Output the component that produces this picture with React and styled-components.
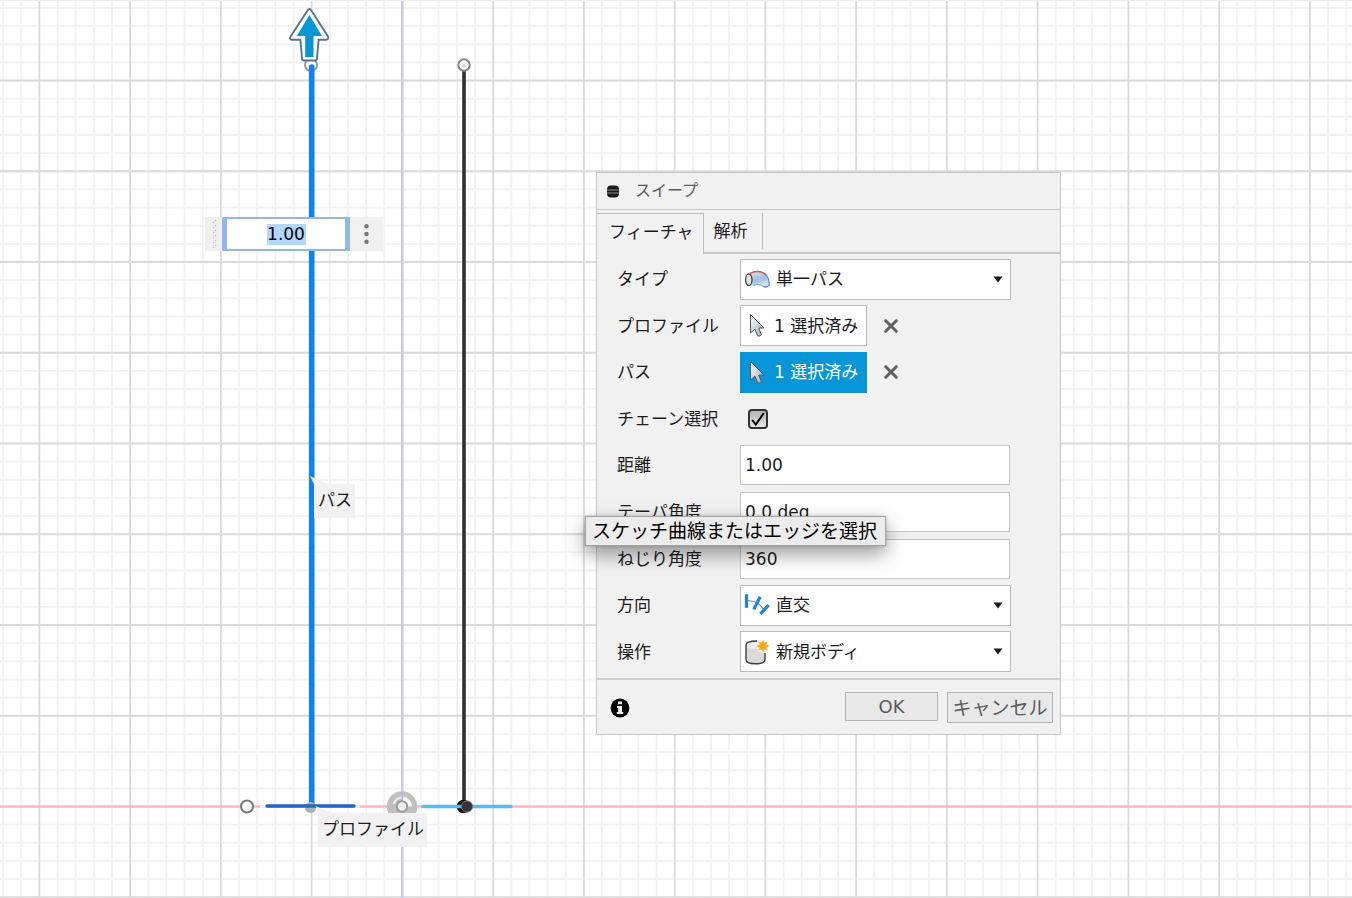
import React from 'react';
import styled, { createGlobalStyle, css } from 'styled-components';

const ORIGIN = { x: 402.4, y: 806.5 };
const STEP = 18.15;

const colors = {
  panel: '#f1f1f1',
  line: '#c8c8c8',
  text: '#1c1c1c',
  muted: '#5a5a5a',
  accent: '#0696d7',
};

const GlobalStyle = createGlobalStyle`
  *, *::before, *::after { box-sizing: border-box; }
  body {
    margin: 0;
    background: #fff;
    color: ${colors.text};
    font: 17px/24px 'DejaVu Sans', 'Noto Sans CJK JP', sans-serif;
  }
  button, input, select { font: inherit; color: inherit; }
`;

const Viewport = styled.main`
  position: relative;
  min-height: 100vh;
  overflow: hidden;
  border-top: 1px solid #eee;
`;

const Drawing = styled.svg`
  position: absolute;
  inset: -1px 0 0;
  width: 100%;
  height: calc(100% + 1px);
`;

const Callout = styled.div`
  position: absolute;
  left: ${(p) => p.$x}px;
  top: ${(p) => p.$y}px;
  padding: 4px 3px 6px 4px;
  background: ${colors.panel};
  white-space: nowrap;
`;

const FloatingField = styled.div`
  position: absolute;
  left: 205px;
  top: 216px;
  display: grid;
  grid-template-columns: 17px 128px 33px;
  height: 34px;
  align-items: stretch;
  background: #f0f0f0;
`;

const FloatingInput = styled.input`
  width: 100%;
  min-width: 0;
  padding: 0;
  border: 2px solid #92b6ee;
  border-width: 2px 5px;
  outline: 0;
  border-radius: 1px;
  text-align: center;
  color: #000;
  background: linear-gradient(#b3d7ff, #b3d7ff) center / 39px 21px no-repeat, #fff;
`;

const IconButton = styled.button`
  display: flex;
  align-items: center;
  justify-content: center;
  padding: 0;
  border: 0;
  background: none;
`;

const Dialog = styled.section`
  position: absolute;
  left: 596px;
  top: 171px;
  width: 465px;
  border: 1px solid ${colors.line};
  background: ${colors.panel};
`;

const Header = styled.header`
  display: flex;
  align-items: center;
  gap: 15px;
  height: 37px;
  padding-left: 9px;
  border-bottom: 1px solid ${colors.line};
`;

const Title = styled.h1`
  margin: 0;
  font-size: 16px;
  font-weight: 400;
  color: ${colors.muted};
`;

const Tabs = styled.div`
  display: flex;
  height: 44px;
  padding-top: 3px;
  border-bottom: 2px solid ${colors.line};
`;

const Tab = styled.button`
  height: 36px;
  padding: 0 14px 0 10px;
  border: 0 solid #bcbcbc;
  border-right-width: 1px;
  background: ${colors.panel};
  white-space: nowrap;
  ${(p) =>
    p.$active &&
    css`
      height: 41px;
      padding: 0 9px 4px 12px;
      border-width: 1px 1px 0 0;
    `}
`;

const Form = styled.form`
  display: grid;
  grid-template-rows: repeat(9, 1fr);
  height: 424px;
  padding: 2px 0 3px 20px;
`;

const Row = styled.div`
  display: grid;
  grid-template-columns: 123px 271px;
  align-items: center;
`;

const Label = styled.label`
  white-space: nowrap;
`;

const SelectBox = styled.div`
  position: relative;
  display: flex;
`;

const Select = styled.select`
  appearance: none;
  width: 100%;
  height: 41px;
  padding: 0 28px 0 35px;
  border: 1px solid #bcbcbc;
  border-radius: 0;
  background: #fff;
`;

const SelectIcon = styled.svg`
  position: absolute;
  left: 4px;
  top: 7px;
  width: 28px;
  height: 28px;
  pointer-events: none;
`;

const Caret = styled.svg`
  position: absolute;
  right: 8px;
  top: 17px;
  width: 10px;
  height: 7px;
  pointer-events: none;
`;

const TextInput = styled.input`
  width: 270px;
  height: 40px;
  padding: 0 4px;
  border: 1px solid ${colors.line};
  background: #fff;
`;

const Selection = styled.div`
  display: flex;
  align-items: center;
  gap: 16px;
`;

const SelectionButton = styled.button`
  display: flex;
  align-items: center;
  gap: 7px;
  width: 127px;
  height: 41px;
  padding: 0 0 0 7px;
  border: 1px solid ${(p) => (p.$active ? colors.accent : '#bcbcbc')};
  background: ${(p) => (p.$active ? colors.accent : '#fff')};
  color: ${(p) => (p.$active ? '#fff' : colors.text)};
  white-space: nowrap;
`;

const Checkbox = styled.input`
  appearance: none;
  width: 20px;
  height: 20px;
  margin: 0 0 0 8px;
  border: 2px solid #333;
  border-radius: 4px;
  background: linear-gradient(#b4b4b4, #e4e4e4);
`;

const CheckHolder = styled.div`
  display: grid;
  justify-items: start;
  > * { grid-area: 1 / 1; }
  > svg { margin-left: 8px; pointer-events: none; }
`;

const Footer = styled.footer`
  display: flex;
  align-items: flex-start;
  gap: 9px;
  height: 56px;
  padding: 12px 7px 0 13px;
  border-top: 2px solid #d0d0d0;
`;

const InfoButton = styled(IconButton)`
  margin: 6px auto 0 0;
`;

const ActionButton = styled.button`
  height: ${(p) => (p.$wide ? 31 : 29)}px;
  width: ${(p) => (p.$wide ? 106 : 93)}px;
  padding: 0;
  border: 1px solid #b4b4b4;
  background: #e8e8e8;
  color: ${colors.muted};
  font-size: ${(p) => (p.$wide ? 19 : 18)}px;
  white-space: nowrap;
`;

const Tooltip = styled.div`
  position: absolute;
  left: 585px;
  top: 515px;
  padding: 1px 8px 1px 6px;
  border: 1px solid #a4a4a4;
  background: #ececec;
  box-shadow: 0 8px 20px rgba(0, 0, 0, 0.4), 0 0 3px rgba(0, 0, 0, 0.2);
  color: #000;
  font-size: 19px;
  line-height: 26px;
  white-space: nowrap;
`;

function GridLines() {
  const minor = [];
  const major = [];
  for (let i = -44; i < 200; i += 1) {
    const target = i % 5 === 0 ? major : minor;
    const x = ORIGIN.x + i * STEP;
    const y = ORIGIN.y + i * STEP;
    if (x > 0) target.push(<line key={`v${i}`} x1={x} x2={x} y1="0" y2="100%" />);
    if (y > 0) target.push(<line key={`h${i}`} x1="0" x2="100%" y1={y} y2={y} />);
  }
  return (
    <>
      <g stroke="#f2f2f2" strokeWidth="1.9">{minor}</g>
      <g stroke="#dadada" strokeWidth="1.8">{major}</g>
    </>
  );
}

function Sketch() {
  return (
    <Drawing aria-hidden="true">
      <GridLines />
      <path d="M402.3 0V1600" stroke="#c8c8ff" strokeWidth="2.4" />
      <line x1="0" x2="100%" y1="806.5" y2="806.5" stroke="#ffb4b4" strokeWidth="1.8" />
      <circle cx="402" cy="806.5" r="15.2" fill="#c0c0c0" />
      <path d="M402 806.5V796.5A10 10 0 0 1 412 806.5Z" fill="#f6f6f6" />
      <path d="M394 804A8.5 8.5 0 0 1 402 797.5" fill="none" stroke="#f0f0f0" strokeWidth="2" />
      <path d="M402.3 791V801" stroke="#b4b4ee" strokeWidth="1.6" />
      <circle cx="402" cy="806.5" r="5.2" fill="#f0ecf6" stroke="#9c9c9c" strokeWidth="2" />
      <path d="M260 806.5H266M355 806.5H360" stroke="#fff" strokeWidth="2" />
      <circle cx="311" cy="65" r="6" fill="#fff" stroke="#999" strokeWidth="2" />
      <path d="M311.7 67V804" stroke="#0d80ff" strokeWidth="5.6" strokeLinecap="round" />
      <circle cx="310.5" cy="807.5" r="5.5" fill="#a8b0bc" />
      <path d="M267 806H354" stroke="#2464c4" strokeWidth="3.4" strokeLinecap="round" />
      <path d="M464 70V804" stroke="#303030" strokeWidth="3.6" />
      <circle cx="464" cy="65" r="5.8" fill="#fff" stroke="#888" strokeWidth="2.1" />
      <circle cx="464" cy="65.5" r="2" fill="#ddd" />
      <circle cx="463.5" cy="806.5" r="6.8" fill="#111" />
      <path d="M423 806.5H511" stroke="#5dbbe9" strokeWidth="3.6" strokeLinecap="round" />
      <circle cx="467" cy="806.5" r="5.6" fill="#333" stroke="#777" />
      <circle cx="247" cy="806.5" r="6" fill="#fff" stroke="#7a7a7a" strokeWidth="2.1" />
      <path
        d="M307.5 10.5Q309.4 7.5 311.3 10.5L328 36.5Q329 39.5 326 39.8H318.6L317 58.5Q317 60.5 315 60.5H304Q302 60.5 302 58.5L300.4 39.8H292Q289 39.5 290.6 36.5Z"
        fill="#fff"
        stroke="#587391"
        strokeWidth="1.9"
      />
      <path d="M309.4 15L322 36H313.5V57H305.2V36H296.8Z" fill={colors.accent} />
      <path d="M310 476L327 484V486H315Z" fill={colors.panel} />
      <path d="M315.5 806L331 813V816H320Z" fill={colors.panel} />
    </Drawing>
  );
}

function Cursor() {
  return (
    <svg width="19" height="27" viewBox="0 0 19 27" aria-hidden="true">
      <path
        d="M2.5 2.5V21L6.9 17.2L9.6 23.8Q11 25 13.4 22.8L10.8 16H16Z"
        fill="url(#cursorFill)"
        stroke="#55585e"
        strokeLinejoin="round"
      />
      <defs>
        <linearGradient id="cursorFill" x1="0" y1="0" x2="1" y2="1">
          <stop offset="0" stopColor="#fff" />
          <stop offset="1" stopColor="#9da5b4" />
        </linearGradient>
      </defs>
    </svg>
  );
}

function PipeIcon() {
  return (
    <SelectIcon viewBox="0 0 28 28" aria-hidden="true">
      <defs>
        <linearGradient id="pipeFill" x1="0" y1="0" x2="0.4" y2="1">
          <stop offset="0" stopColor="#d5e5f3" />
          <stop offset="0.6" stopColor="#9fc0e2" />
          <stop offset="1" stopColor="#d0e1f2" />
        </linearGradient>
      </defs>
      <path d="M5 7.8Q9 5.4 14 5.6Q25 6.4 25.3 19.2Q22.5 22 19.4 20.6Q14.5 16.8 9.5 19.5L5 19.8Z" fill="url(#pipeFill)" />
      <path d="M6 7.3Q10 5.3 14 5.6Q19.5 6 22.5 9.4" fill="none" stroke="#da5148" strokeWidth="1.5" />
      <path d="M22.5 9.4Q25.2 12.8 25.3 19.2Q22.5 22 19.4 20.6" fill="none" stroke="#5078d2" strokeWidth="1.1" />
      <path d="M19.4 20.6Q14.5 16.8 9.5 19.5" fill="none" stroke="#7f9fd0" />
      <ellipse cx="4.8" cy="13.7" rx="3.2" ry="5.9" fill="#dde3de" stroke="#3c3c3c" strokeWidth="1.2" />
    </SelectIcon>
  );
}

function OrientationIcon() {
  return (
    <SelectIcon viewBox="0 0 28 28" aria-hidden="true">
      <path d="M3 8.8Q14 8 21 19" fill="none" stroke="#888" strokeWidth="1.2" />
      <path d="M2.5 2.3V15.8M16.2 4.8L9.8 17.4M24.8 13L16.4 21.8" stroke="#1787ea" strokeWidth="3.2" />
    </SelectIcon>
  );
}

function NewBodyIcon() {
  return (
    <SelectIcon viewBox="0 0 28 28" aria-hidden="true">
      <path d="M2 7V21.5Q2 25.8 11.5 25.8T21 21.5V7" fill="#d9d9d9" />
      <ellipse cx="11.5" cy="7" rx="9.5" ry="4" fill="#ededed" />
      <path d="M13 3Q2 3 2 7V21.5Q2 25.8 11.5 25.8T21 21.5V15" fill="none" stroke="#3b3b3b" strokeWidth="1.4" />
      <circle cx="19" cy="8" r="7" fill="#fff" opacity="0.7" />
      <path
        d="M19 1.5L20.4 4.8L23.6 3.4L22.2 6.6L25.5 8L22.2 9.4L23.6 12.6L20.4 11.2L19 14.5L17.6 11.2L14.4 12.6L15.8 9.4L12.5 8L15.8 6.6L14.4 3.4L17.6 4.8Z"
        fill="#ffa31a"
      />
    </SelectIcon>
  );
}

function SelectRow({ id, label, value, icon }) {
  return (
    <Row>
      <Label htmlFor={id}>{label}</Label>
      <SelectBox>
        <Select id={id} defaultValue={value}>
          <option>{value}</option>
        </Select>
        {icon}
        <Caret viewBox="0 0 10 7" aria-hidden="true">
          <path d="M0.5 0.5H9.5L5 6.5Z" fill="#1a1a1a" />
        </Caret>
      </SelectBox>
    </Row>
  );
}

function SelectionRow({ id, label, active }) {
  return (
    <Row>
      <Label htmlFor={id}>{label}</Label>
      <Selection>
        <SelectionButton id={id} type="button" $active={active}>
          <Cursor />
          1 選択済み
        </SelectionButton>
        <IconButton type="button" aria-label="選択を解除">
          <svg width="16" height="16" viewBox="0 0 16 16" aria-hidden="true">
            <path d="M2.7 2.7L13.3 13.3M13.3 2.7L2.7 13.3" stroke="#606060" strokeWidth="3" strokeLinecap="round" />
          </svg>
        </IconButton>
      </Selection>
    </Row>
  );
}

function TextRow({ id, label, value }) {
  return (
    <Row>
      <Label htmlFor={id}>{label}</Label>
      <TextInput id={id} type="text" defaultValue={value} />
    </Row>
  );
}

function DistanceField() {
  return (
    <FloatingField>
      <svg width="17" height="34" viewBox="0 0 17 34" aria-hidden="true">
        <path
          d="M11 3L8 6M11 8L8 11M11 13L8 16M11 18L8 21M11 23L8 26M11 28L8 31"
          stroke="#c4c4c4"
          strokeWidth="1.4"
          strokeDasharray="1.4 1.4"
        />
      </svg>
      <FloatingInput type="text" aria-label="距離" defaultValue="1.00" />
      <IconButton type="button" aria-label="メニュー">
        <svg width="6" height="22" viewBox="0 0 6 22" fill="#777" aria-hidden="true">
          <circle cx="2.5" cy="3.3" r="2.2" />
          <circle cx="2.5" cy="11" r="2.2" />
          <circle cx="2.5" cy="18.7" r="2.2" />
        </svg>
      </IconButton>
    </FloatingField>
  );
}

function SweepDialog() {
  return (
    <Dialog role="dialog" aria-labelledby="sweep-title">
      <Header>
        <IconButton type="button" aria-label="折りたたむ">
          <svg width="14" height="14" viewBox="0 0 14 14" aria-hidden="true">
            <rect x="1" y="1.5" width="12" height="12" rx="4" fill="#1a1a1a" />
            <path d="M1 6H13M1 9H13" stroke="#8c8c8c" />
          </svg>
        </IconButton>
        <Title id="sweep-title">スイープ</Title>
      </Header>
      <Tabs role="tablist">
        <Tab type="button" role="tab" aria-selected="true" $active>フィーチャ</Tab>
        <Tab type="button" role="tab" aria-selected="false">解析</Tab>
      </Tabs>
      <Form>
        <SelectRow id="type" label="タイプ" value="単一パス" icon={<PipeIcon />} />
        <SelectionRow id="profile" label="プロファイル" />
        <SelectionRow id="path" label="パス" active />
        <Row>
          <Label htmlFor="chain">チェーン選択</Label>
          <CheckHolder>
            <Checkbox id="chain" type="checkbox" defaultChecked />
            <svg width="20" height="20" viewBox="0 0 20 20" aria-hidden="true">
              <path d="M4.2 11L7.8 15.5L15.8 4" fill="none" stroke="#000" strokeWidth="2" />
            </svg>
          </CheckHolder>
        </Row>
        <TextRow id="distance" label="距離" value="1.00" />
        <TextRow id="taper" label="テーパ角度" value="0.0 deg" />
        <TextRow id="twist" label="ねじり角度" value="360" />
        <SelectRow id="orientation" label="方向" value="直交" icon={<OrientationIcon />} />
        <SelectRow id="operation" label="操作" value="新規ボディ" icon={<NewBodyIcon />} />
      </Form>
      <Footer>
        <InfoButton type="button" aria-label="情報">
          <svg width="20" height="20" viewBox="0 0 20 20" aria-hidden="true">
            <circle cx="10" cy="10" r="9.4" fill="#050505" />
            <path d="M8 3.5H12V6.3H8ZM7 8H12V14H13.2V16H6.8V14H8.2V10H7Z" fill="#f1f1f1" />
          </svg>
        </InfoButton>
        <ActionButton type="button">OK</ActionButton>
        <ActionButton type="button" $wide>キャンセル</ActionButton>
      </Footer>
    </Dialog>
  );
}

export default function App() {
  return (
    <>
      <GlobalStyle />
      <Viewport>
        <Sketch />
        <DistanceField />
        <Callout $x={314} $y={483}>パス</Callout>
        <Callout $x={318} $y={812}>プロファイル</Callout>
        <SweepDialog />
        <Tooltip role="tooltip">スケッチ曲線またはエッジを選択</Tooltip>
      </Viewport>
    </>
  );
}
